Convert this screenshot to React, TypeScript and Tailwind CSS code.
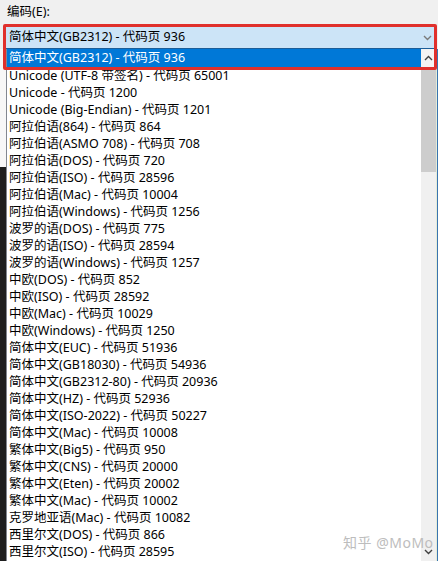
import React from 'react'

const ITEMS = [
  'Unicode (UTF-8 带签名) - 代码页 65001',
  'Unicode - 代码页 1200',
  'Unicode (Big-Endian) - 代码页 1201',
  '阿拉伯语(864) - 代码页 864',
  '阿拉伯语(ASMO 708) - 代码页 708',
  '阿拉伯语(DOS) - 代码页 720',
  '阿拉伯语(ISO) - 代码页 28596',
  '阿拉伯语(Mac) - 代码页 10004',
  '阿拉伯语(Windows) - 代码页 1256',
  '波罗的语(DOS) - 代码页 775',
  '波罗的语(ISO) - 代码页 28594',
  '波罗的语(Windows) - 代码页 1257',
  '中欧(DOS) - 代码页 852',
  '中欧(ISO) - 代码页 28592',
  '中欧(Mac) - 代码页 10029',
  '中欧(Windows) - 代码页 1250',
  '简体中文(EUC) - 代码页 51936',
  '简体中文(GB18030) - 代码页 54936',
  '简体中文(GB2312-80) - 代码页 20936',
  '简体中文(HZ) - 代码页 52936',
  '简体中文(ISO-2022) - 代码页 50227',
  '简体中文(Mac) - 代码页 10008',
  '繁体中文(Big5) - 代码页 950',
  '繁体中文(CNS) - 代码页 20000',
  '繁体中文(Eten) - 代码页 20002',
  '繁体中文(Mac) - 代码页 10002',
  '克罗地亚语(Mac) - 代码页 10082',
  '西里尔文(DOS) - 代码页 866',
  '西里尔文(ISO) - 代码页 28595',
]

function Chevron({ up, className }: { up?: boolean; className?: string }) {
  return (
    <svg width="9" height="6" viewBox="0 0 9 6" className={className}>
      <path d={up ? 'M1 5 L4.5 1.5 L8 5' : 'M1 1 L4.5 4.5 L8 1'} fill="none" stroke="currentColor" strokeWidth="1.4" />
    </svg>
  )
}

export default function App() {
  return (
    <div
      className="relative w-[438px] h-[561px] overflow-hidden bg-[#f0f0f0] text-[12.5px] text-black"
      style={{ fontFamily: '"Noto Sans", "Noto Sans CJK SC", sans-serif' }}
    >
      <div className="h-[27px] pl-[7px] pt-[4px] leading-[16px]">编码(E):</div>

      {/* combo */}
      <div className="ml-[6px] mr-[2px] h-[22px] flex items-center justify-between bg-[#cce4f7] border-b border-[#1d5e98] pl-[3px] pr-[4px]">
        <span>简体中文(GB2312) - 代码页 936</span>
        <Chevron className="text-[#7a7a7a]" />
      </div>

      {/* dropdown list */}
      <div className="flex h-[512px]">
        <div className="w-[6px] flex flex-col">
          <div className="h-[118px] bg-[#f7f7f7]" />
          <div className="flex-1 bg-[#1e1e1e]" />
        </div>
        <div className="w-px bg-[#828790]" />
        <div className="flex-1 bg-white overflow-hidden">
          <div className="h-[18px] leading-[18px] pl-[2px] bg-[#0078d7] text-white whitespace-nowrap">简体中文(GB2312) - 代码页 936</div>
          {ITEMS.map((t) => (
            <div key={t} className="h-[17px] leading-[17px] pl-[2px] whitespace-nowrap">{t}</div>
          ))}
        </div>
        <div className="w-[15px] flex flex-col bg-[#f0f0f0]">
          <div className="h-[18px] flex items-center justify-center text-[#404040] bg-[#f4f4f4]">
            <Chevron up />
          </div>
          <div className="h-[105px] bg-[#cdcdcd]" />
          <div className="flex-1" />
          <div className="h-[18px] flex items-center justify-center text-[#404040]">
            <Chevron />
          </div>
        </div>
        <div className="w-px bg-[#e4ecd8]" />
        <div className="w-px bg-[#3a74b0]" />
      </div>

      {/* red annotation frame */}
      <div className="absolute left-[3px] top-[24px] w-[434px] h-[46px] border-[3px] border-[#e0302c] rounded-[2px]" />

      {/* watermark */}
      <div className="absolute left-[343px] top-[532px] text-[14px] text-[#bdbdbd] tracking-[0.5px]">知乎 @MoMo</div>
    </div>
  )
}
